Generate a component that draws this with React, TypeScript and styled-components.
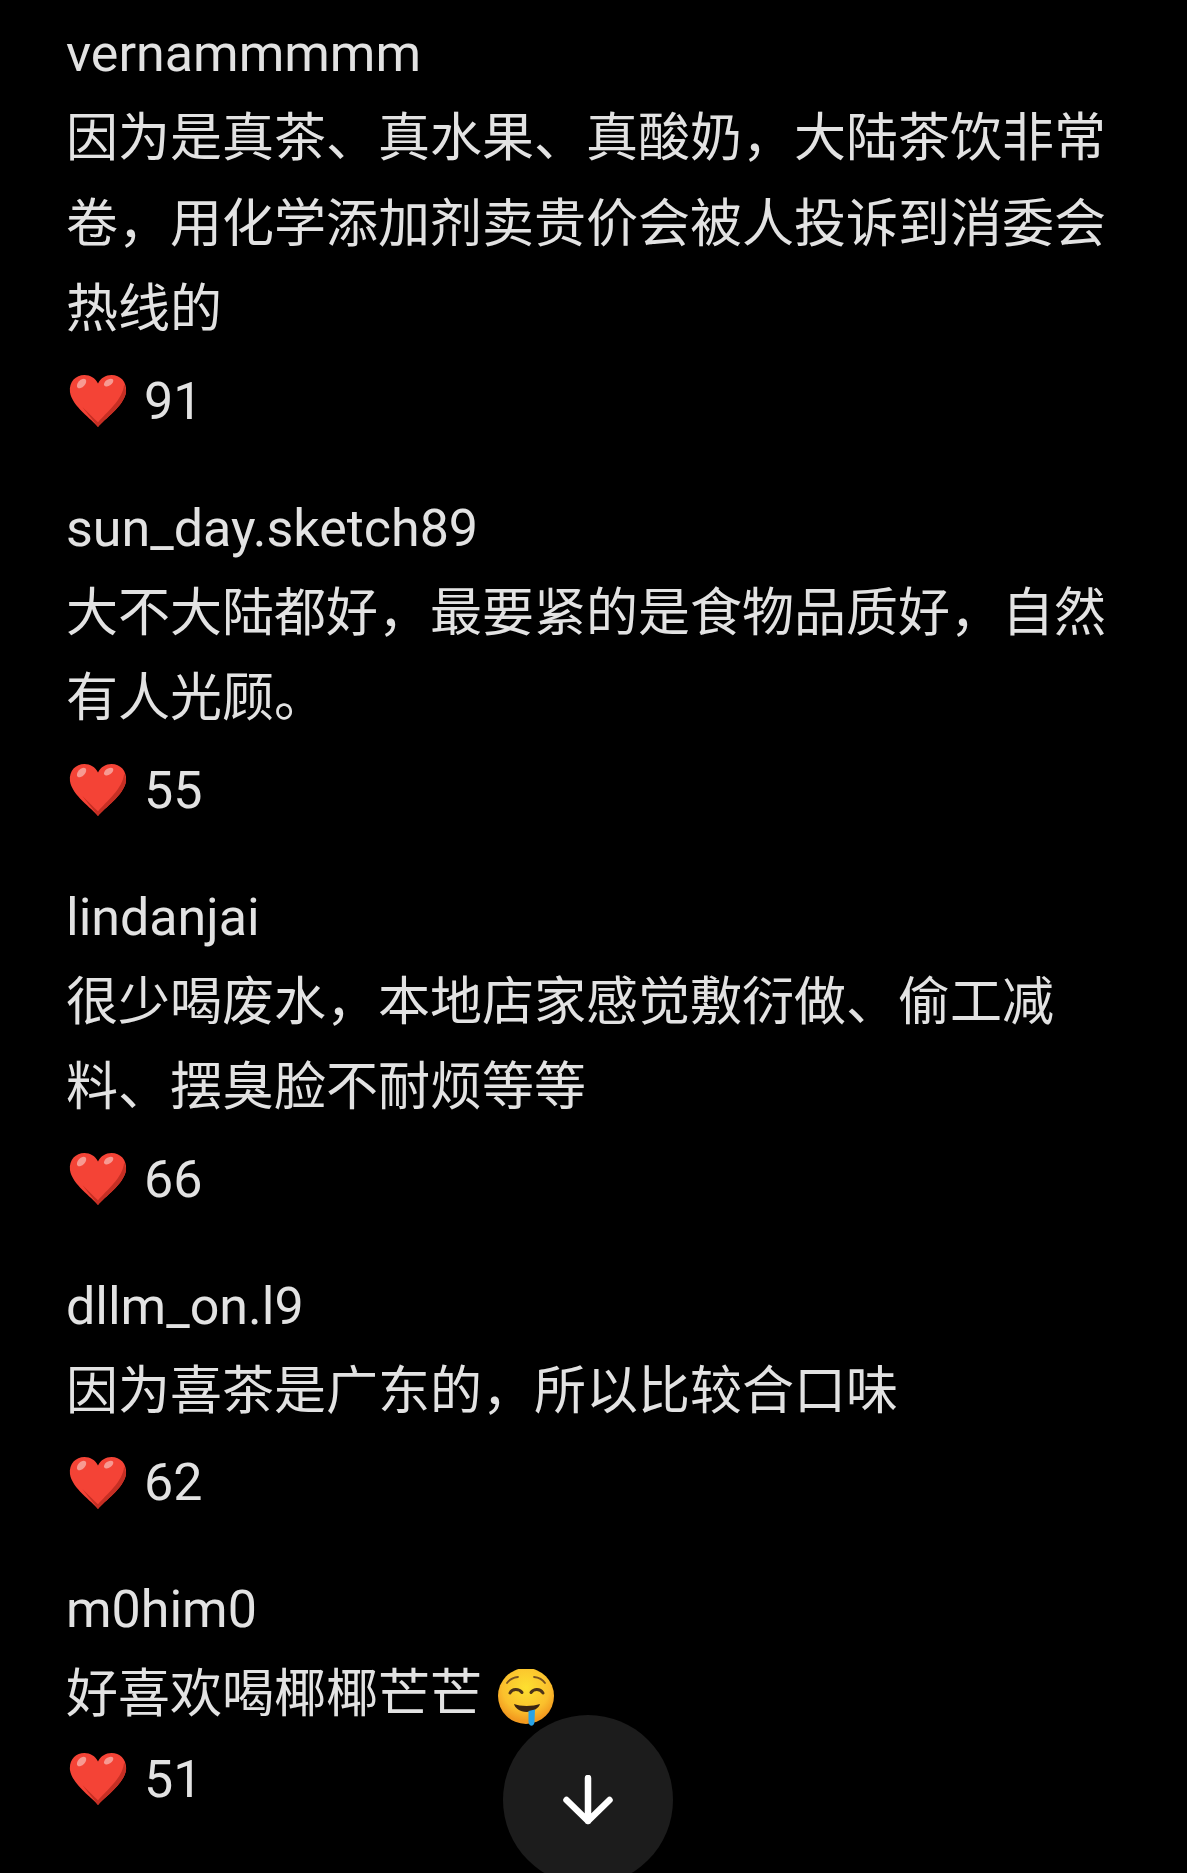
import React from 'react'
import styled, { createGlobalStyle } from 'styled-components'

const GlobalStyle = createGlobalStyle`
  html, body {
    margin: 0;
    padding: 0;
    background: #000;
  }
`

const Page = styled.div`
  position: relative;
  width: 1187px;
  height: 1873px;
  overflow: hidden;
  box-sizing: border-box;
  padding: 16px 66px 0;
  background: #000;
  color: #e2e2e2;
  font-family: Roboto, "Noto Sans CJK SC", sans-serif;
`

const Comment = styled.div`
  margin-bottom: 61px;
`

const Name = styled.div`
  font-size: 52px;
  line-height: 75px;
`

const Body = styled.div`
  width: 1060px;
  font-size: 52px;
  line-height: 85.5px;
  font-family: "Noto Sans CJK SC", sans-serif;
`

const Likes = styled.div<{ $tight?: boolean }>`
  display: flex;
  align-items: center;
  gap: 17px;
  height: 56px;
  margin-top: ${(p) => (p.$tight ? 19 : 26)}px;
  padding-left: 3px;
  font-size: 52px;
  line-height: 56px;
`

const InlineEmoji = styled.svg`
  width: 56px;
  height: 58px;
  vertical-align: -15px;
  margin-left: 16px;
`

const ScrollButton = styled.button`
  position: absolute;
  left: 503px;
  top: 1715px;
  display: flex;
  align-items: center;
  justify-content: center;
  width: 170px;
  height: 170px;
  padding: 0;
  border: 0;
  border-radius: 50%;
  background: #1c1c1c;
`

const Heart: React.FC = () => (
  <svg width="58" height="53" viewBox="0 0 60 56" preserveAspectRatio="none">
    <path
      d="M30 55C24 47 3 33 1 18C0 7 7 0 16 0C22 0 27 3 30 9C33 3 38 0 44 0C53 0 60 7 59 18C57 33 36 47 30 55Z"
      fill="#f44336"
    />
    <path d="M30 55C36 47 57 33 59 18C59 15 58 12 57 10C56 26 38 40 30 50C26 46 20 40 14 34C19 41 26 49 30 55Z" fill="#c62f24" />
    <ellipse cx="13" cy="9" rx="6" ry="3.6" transform="rotate(-48 13 9)" fill="#f79a92" />
    <ellipse cx="41" cy="8" rx="5.5" ry="3.2" transform="rotate(-35 41 8)" fill="#f79a92" />
  </svg>
)

const DroolFace: React.FC = () => (
  <InlineEmoji viewBox="0 0 56 58">
    <defs>
      <radialGradient id="face" cx="50%" cy="35%" r="60%">
        <stop offset="0%" stopColor="#fde030" />
        <stop offset="70%" stopColor="#fbc02d" />
        <stop offset="100%" stopColor="#f29a1f" />
      </radialGradient>
    </defs>
    <circle cx="28" cy="27" r="28" fill="url(#face)" />
    <path d="M9 14C11 11 15 8.500 20 8M36 8C41 8.500 45 11 47 14" stroke="#7a5320" strokeWidth="1.800" fill="none" strokeLinecap="round" />
    <path d="M12 24C14 19.500 21 19.500 24 23.500M33 23.500C36 19.500 42 19.500 45 24" stroke="#4e3418" strokeWidth="3" fill="none" strokeLinecap="round" />
    <path d="M16 35C22 37.500 35 37.500 42 35C41 39 35 43 28.500 43C22 43 17 39 16 35Z" fill="#3b2412" />
    <path d="M30.500 42L37 40.500L36.500 53C36 58 31 58 30.500 53Z" fill="#29a3e6" />
  </InlineEmoji>
)

const comments = [
  { name: 'vernammmmm', text: '因为是真茶、真水果、真酸奶\uFF0C大陆茶饮非常卷\uFF0C用化学添加剂卖贵价会被人投诉到消委会热线的', likes: 91 },
  { name: 'sun_day.sketch89', text: '大不大陆都好\uFF0C最要紧的是食物品质好\uFF0C自然有人光顾。', likes: 55 },
  { name: 'lindanjai', text: '很少喝废水\uFF0C本地店家感觉敷衍做、偷工减料、摆臭脸不耐烦等等', likes: 66 },
  { name: 'dllm_on.l9', text: '因为喜茶是广东的\uFF0C所以比较合口味', likes: 62 },
  { name: 'm0him0', text: '好喜欢喝椰椰芒芒', likes: 51, emoji: true },
]

const App: React.FC = () => (
  <Page>
    <GlobalStyle />
    {comments.map((c) => (
      <Comment key={c.name}>
        <Name>{c.name}</Name>
        <Body>
          {c.text}
          {c.emoji && <DroolFace />}
        </Body>
        <Likes $tight={c.emoji}>
          <Heart />
          {c.likes}
        </Likes>
      </Comment>
    ))}
    <ScrollButton aria-label="scroll down">
      <svg width="50" height="50" viewBox="0 0 50 50" fill="none" stroke="#fff" strokeWidth="6.500" strokeLinecap="round" strokeLinejoin="round">
        <path d="M25 3V46M3.500 25L25 46L46.500 25" />
      </svg>
    </ScrollButton>
  </Page>
)

export default App
